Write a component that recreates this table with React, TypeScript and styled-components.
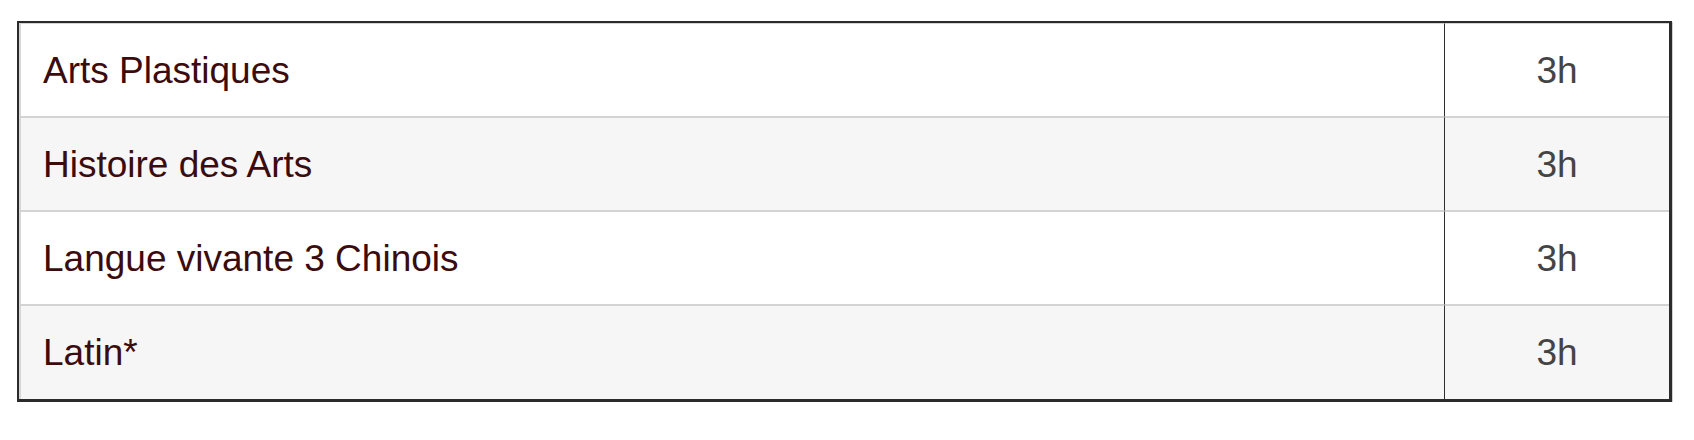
import React from "react";
import styled, { createGlobalStyle } from "styled-components";

const GlobalStyle = createGlobalStyle`
  html, body {
    margin: 0;
    padding: 0;
    background: #ffffff;
  }
  body {
    font-family: "Liberation Sans", Arial, Helvetica, sans-serif;
  }
`;

const Page = styled.div`
  padding: 21px 0 0 17px;
`;

const Table = styled.table`
  border-collapse: separate;
  border-spacing: 0;
  width: 1655px;
  border-style: solid;
  border-color: #2b2b2b;
  border-width: 2px 3px 3px 2px;
  box-shadow: 1px 1px 0 #d2d2d2;
  table-layout: fixed;
`;

const Row = styled.tr<{ $shaded: boolean }>`
  background: ${(p) => (p.$shaded ? "#f6f6f6" : "#ffffff")};
`;

const Cell = styled.td<{ $last: boolean }>`
  box-sizing: border-box;
  height: ${(p) => (p.$last ? 94 : 94)}px;
  padding: 0;
  border-top: 1px solid #d3d3d3;
  border-bottom: ${(p) => (p.$last ? "none" : "1px solid #d3d3d3")};
  font-size: 37px;
  line-height: 1;
  vertical-align: middle;
`;

const SubjectCell = styled(Cell)`
  width: 1426px;
  border-left: 2px solid #d6d6d6;
  border-right: 1px solid #2e2e2e;
  padding-left: 22px;
  color: #3b0b0d;
  text-align: left;
`;

const HoursCell = styled(Cell)`
  color: #444444;
  text-align: center;
`;

const rows = [
  { subject: "Arts Plastiques", hours: "3h" },
  { subject: "Histoire des Arts", hours: "3h" },
  { subject: "Langue vivante 3 Chinois", hours: "3h" },
  { subject: "Latin*", hours: "3h" },
];

export default function App() {
  return (
    <>
      <GlobalStyle />
      <Page>
        <Table>
          <tbody>
            {rows.map((r, i) => (
              <Row key={r.subject} $shaded={i % 2 === 1}>
                <SubjectCell $last={i === rows.length - 1}>{r.subject}</SubjectCell>
                <HoursCell $last={i === rows.length - 1}>{r.hours}</HoursCell>
              </Row>
            ))}
          </tbody>
        </Table>
      </Page>
    </>
  );
}
